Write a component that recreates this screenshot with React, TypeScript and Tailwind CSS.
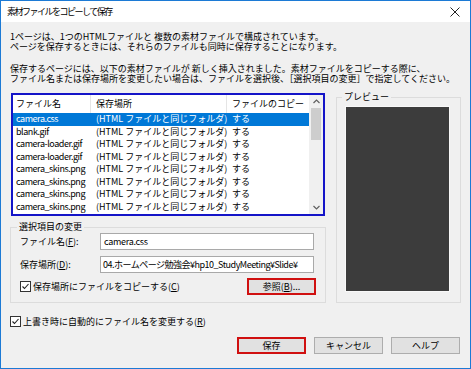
import type { ReactNode } from 'react'

const rows = [
  'camera.css',
  'blank.gif',
  'camera-loader.gif',
  'camera-loader.gif',
  'camera_skins.png',
  'camera_skins.png',
  'camera_skins.png',
  'camera_skins.png',
]

function CheckBox() {
  return (
    <svg width="11" height="11" viewBox="0 0 11 11" className="shrink-0">
      <rect x="0.5" y="0.5" width="10" height="10" fill="#fff" stroke="#333" />
      <path d="M2.5 5.5 L4.5 7.5 L8.5 3" fill="none" stroke="#222" strokeWidth="1.1" />
    </svg>
  )
}

function Key({ k }: { k: string }) {
  return (
    <>
      (<span className="underline">{k}</span>)
    </>
  )
}

function Button({ children, marked }: { children: ReactNode; marked?: boolean }) {
  return (
    <div
      className={`w-[69px] h-[17px] flex items-center justify-center bg-[#e1e1e1] ${
        marked ? 'border-2 border-[#d01010]' : 'border border-[#adadad]'
      }`}
    >
      {children}
    </div>
  )
}

export default function App() {
  return (
    <div
      className="w-[471px] h-[369px] border border-[#1c7ad5] bg-[#f0f0f0] flex flex-col overflow-hidden text-[9px] leading-[10px] text-black"
      style={{ fontFamily: "'Noto Sans CJK JP', 'Noto Sans', sans-serif" }}
    >
      {/* Title bar */}
      <div className="h-[21px] bg-white flex items-center justify-between pl-[6px] pr-[10px]">
        <span className="tracking-[-1.5px]">素材ファイルをコピーして保存</span>
        <svg width="10" height="10" viewBox="0 0 10 10">
          <path d="M0.5 0.5 L9.5 9.5 M9.5 0.5 L0.5 9.5" stroke="#222" strokeWidth="1" />
        </svg>
      </div>

      <div className="px-[9px] flex flex-col">
        {/* Intro */}
        <div className="mt-[10px] whitespace-nowrap">
          <div className="h-[10px]">1ページは、1つのHTMLファイルと 複数の素材ファイルで構成されています。</div>
          <div className="h-[10px]">ページを保存するときには、それらのファイルも同時に保存することになります。</div>
        </div>
        <div className="mt-[12px] whitespace-nowrap">
          <div className="h-[10px]">保存するページには、以下の素材ファイルが 新しく挿入されました。素材ファイルをコピーする際に、</div>
          <div className="h-[10px]">ファイル名または保存場所を変更したい場合は、ファイルを選択後、［選択項目の変更］で指定してください。</div>
        </div>

        {/* Main row */}
        <div className="mt-[9px] flex">
          <div className="w-[316px] flex flex-col">
            {/* File list */}
            <div className="ml-[1px] w-[314px] h-[123px] border-2 border-[#1414c8] bg-white flex">
              <div className="flex-1 flex flex-col">
                <div className="h-[18px] flex items-center">
                  <div className="w-[78px] h-full pl-[3px] flex items-center border-r border-[#e5e5e5]">ファイル名</div>
                  <div className="w-[136px] h-full pl-[5px] flex items-center border-r border-[#e5e5e5]">保存場所</div>
                  <div className="flex-1 h-full pl-[5px] flex items-center">ファイルのコピー</div>
                </div>
                {rows.map((name, i) => (
                  <div
                    key={i}
                    className={`h-[12.5px] flex items-center whitespace-nowrap ${
                      i === 0 ? 'bg-[#0078d7] text-white' : ''
                    }`}
                  >
                    <div className="w-[78px] pl-[3px] tracking-[-0.45px]">{name}</div>
                    <div className="w-[136px] pl-[5px]">(HTML ファイルと同じフォルダ)</div>
                    <div className="flex-1 pl-[5px]">する</div>
                  </div>
                ))}
              </div>
              {/* Scrollbar */}
              <div className="w-[14px] bg-[#f0f0f0] flex flex-col items-center">
                <div className="h-[13px] flex items-center justify-center">
                  <svg width="7" height="5" viewBox="0 0 7 5">
                    <path d="M0.5 4 L3.5 1 L6.5 4" fill="none" stroke="#606060" strokeWidth="1.2" />
                  </svg>
                </div>
                <div className="w-[10px] h-[32px] bg-[#cdcdcd]" />
                <div className="flex-1" />
                <div className="h-[13px] flex items-center justify-center">
                  <svg width="7" height="5" viewBox="0 0 7 5">
                    <path d="M0.5 1 L3.5 4 L6.5 1" fill="none" stroke="#606060" strokeWidth="1.2" />
                  </svg>
                </div>
              </div>
            </div>

            {/* Selection group */}
            <fieldset className="mt-[6px] h-[81px] border border-[#dcdcdc] px-[9px] pb-[6px]">
              <legend className="ml-[-3px] px-[2px]">選択項目の変更</legend>
              <div className="flex items-center mt-[1px]">
                <span className="w-[80px]">ファイル名<Key k="F" />:</span>
                <div className="w-[214px] h-[17px] bg-white border border-[#a9a9a9] flex items-center pl-[3px] tracking-[-0.3px]">
                  camera.css
                </div>
              </div>
              <div className="flex items-center mt-[6px]">
                <span className="w-[80px]">保存場所<Key k="D" />:</span>
                <div className="w-[214px] h-[17px] bg-white border border-[#a9a9a9] flex items-center pl-[2px] whitespace-nowrap tracking-[-0.5px]">
                  04.ホームページ勉強会¥hp10_StudyMeeting¥Slide¥
                </div>
              </div>
              <div className="flex items-center justify-between mt-[5px]">
                <div className="flex items-center gap-[2px]">
                  <CheckBox />
                  <span>保存場所にファイルをコピーする<Key k="C" /></span>
                </div>
                <Button marked>
                  参照<Key k="B" />...
                </Button>
              </div>
            </fieldset>
          </div>

          {/* Preview group */}
          <fieldset className="ml-[10px] w-[125px] h-[211px] -mt-[1px] border border-[#dcdcdc] pl-[8px]">
            <legend className="ml-[-3px] px-[2px]">プレビュー</legend>
            <div className="mt-[4px] w-[105px] h-[186px] bg-[#3c3c3c] border border-[#f8f8f8]" />
          </fieldset>
        </div>

        {/* Auto rename */}
        <div className="mt-[13px] flex items-center gap-[2px]">
          <CheckBox />
          <span>上書き時に自動的にファイル名を変更する<Key k="R" /></span>
        </div>

        {/* Buttons */}
        <div className="mt-[10px] flex justify-end gap-[8px] pr-[1px]">
          <Button marked>保存</Button>
          <Button>キャンセル</Button>
          <Button>ヘルプ</Button>
        </div>
      </div>
    </div>
  )
}
